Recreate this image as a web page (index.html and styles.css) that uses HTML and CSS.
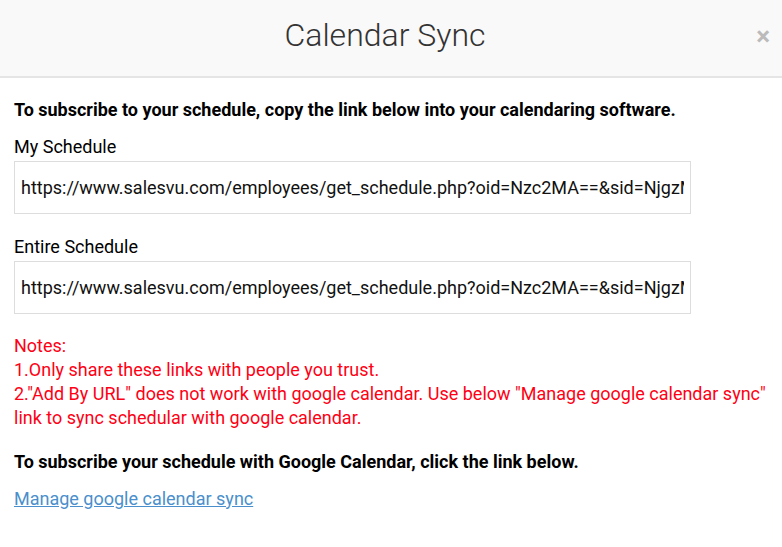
FILE: index.html
```html
<!DOCTYPE html>
<html>
<head>
<meta charset="utf-8">
<link rel="stylesheet" href="styles.css">
</head>
<body>
<div class="modal">
  <div class="modal-header">
    <h2 class="title">Calendar Sync</h2>
    <span class="close">&#215;</span>
  </div>
  <div class="modal-body">
    <p class="lead">To subscribe to your schedule, copy the link below into your calendaring software.</p>
    <label class="field-label" for="my-schedule">My Schedule</label>
    <input id="my-schedule" class="url-box" type="text" readonly value="https://www.salesvu.com/employees/get_schedule.php?oid=Nzc2MA==&amp;sid=NjgzMTk0">
    <label class="field-label second" for="entire-schedule">Entire Schedule</label>
    <input id="entire-schedule" class="url-box" type="text" readonly value="https://www.salesvu.com/employees/get_schedule.php?oid=Nzc2MA==&amp;sid=NjgzMTk0">
    <div class="notes">Notes:<br>1.Only share these links with people you trust.<br>2."Add By URL" does not work with google calendar. Use below "Manage google calendar sync" link to sync schedular with google calendar.</div>
    <p class="lead google">To subscribe your schedule with Google Calendar, click the link below.</p>
    <a class="sync-link" href="#">Manage google calendar sync</a>
  </div>
</div>
</body>
</html>
```
FILE: styles.css
```css
html, body {
  margin: 0;
  padding: 0;
  background: #fff;
}
body {
  font-family: Roboto, "Liberation Sans", sans-serif;
  color: #000;
}
.modal-header {
  position: relative;
  height: 76px;
  background: #f9f9f9;
  border-bottom: 2px solid #e5e5e5;
  display: flex;
  align-items: center;
  justify-content: center;
}
.title {
  margin: 0 12px 6px 0;
  font-weight: 300;
  font-size: 32px;
  color: #333;
}
.close {
  position: absolute;
  right: 12px;
  top: 21px;
  font-size: 26px;
  font-weight: 700;
  color: #bbb;
}
.modal-body {
  padding: 20px 14px 20px 14px;
}
.lead {
  margin: 0;
  font-size: 18px;
  font-weight: 700;
  line-height: 24px;
}
.field-label {
  display: block;
  font-size: 18px;
  line-height: 24px;
  margin-top: 13px;
  margin-bottom: 2px;
}
.field-label.second {
  margin-top: 21px;
}
.url-box {
  display: block;
  width: 677px;
  box-sizing: border-box;
  height: 53px;
  margin: 0;
  border: 1px solid #ddd;
  border-radius: 0;
  background: #fff;
  padding: 0 6px;
  font-family: Roboto, "Liberation Sans", sans-serif;
  font-size: 18px;
  line-height: 51px;
  color: #111;
  outline: none;
}
.notes {
  margin-top: 20px;
  color: #ff0014;
  font-size: 18px;
  line-height: 24px;
}
.google {
  margin-top: 20px;
}
.sync-link {
  display: inline-block;
  margin-top: 13px;
  font-size: 18px;
  line-height: 24px;
  color: #4a8fcc;
  text-decoration: underline;
}
```
